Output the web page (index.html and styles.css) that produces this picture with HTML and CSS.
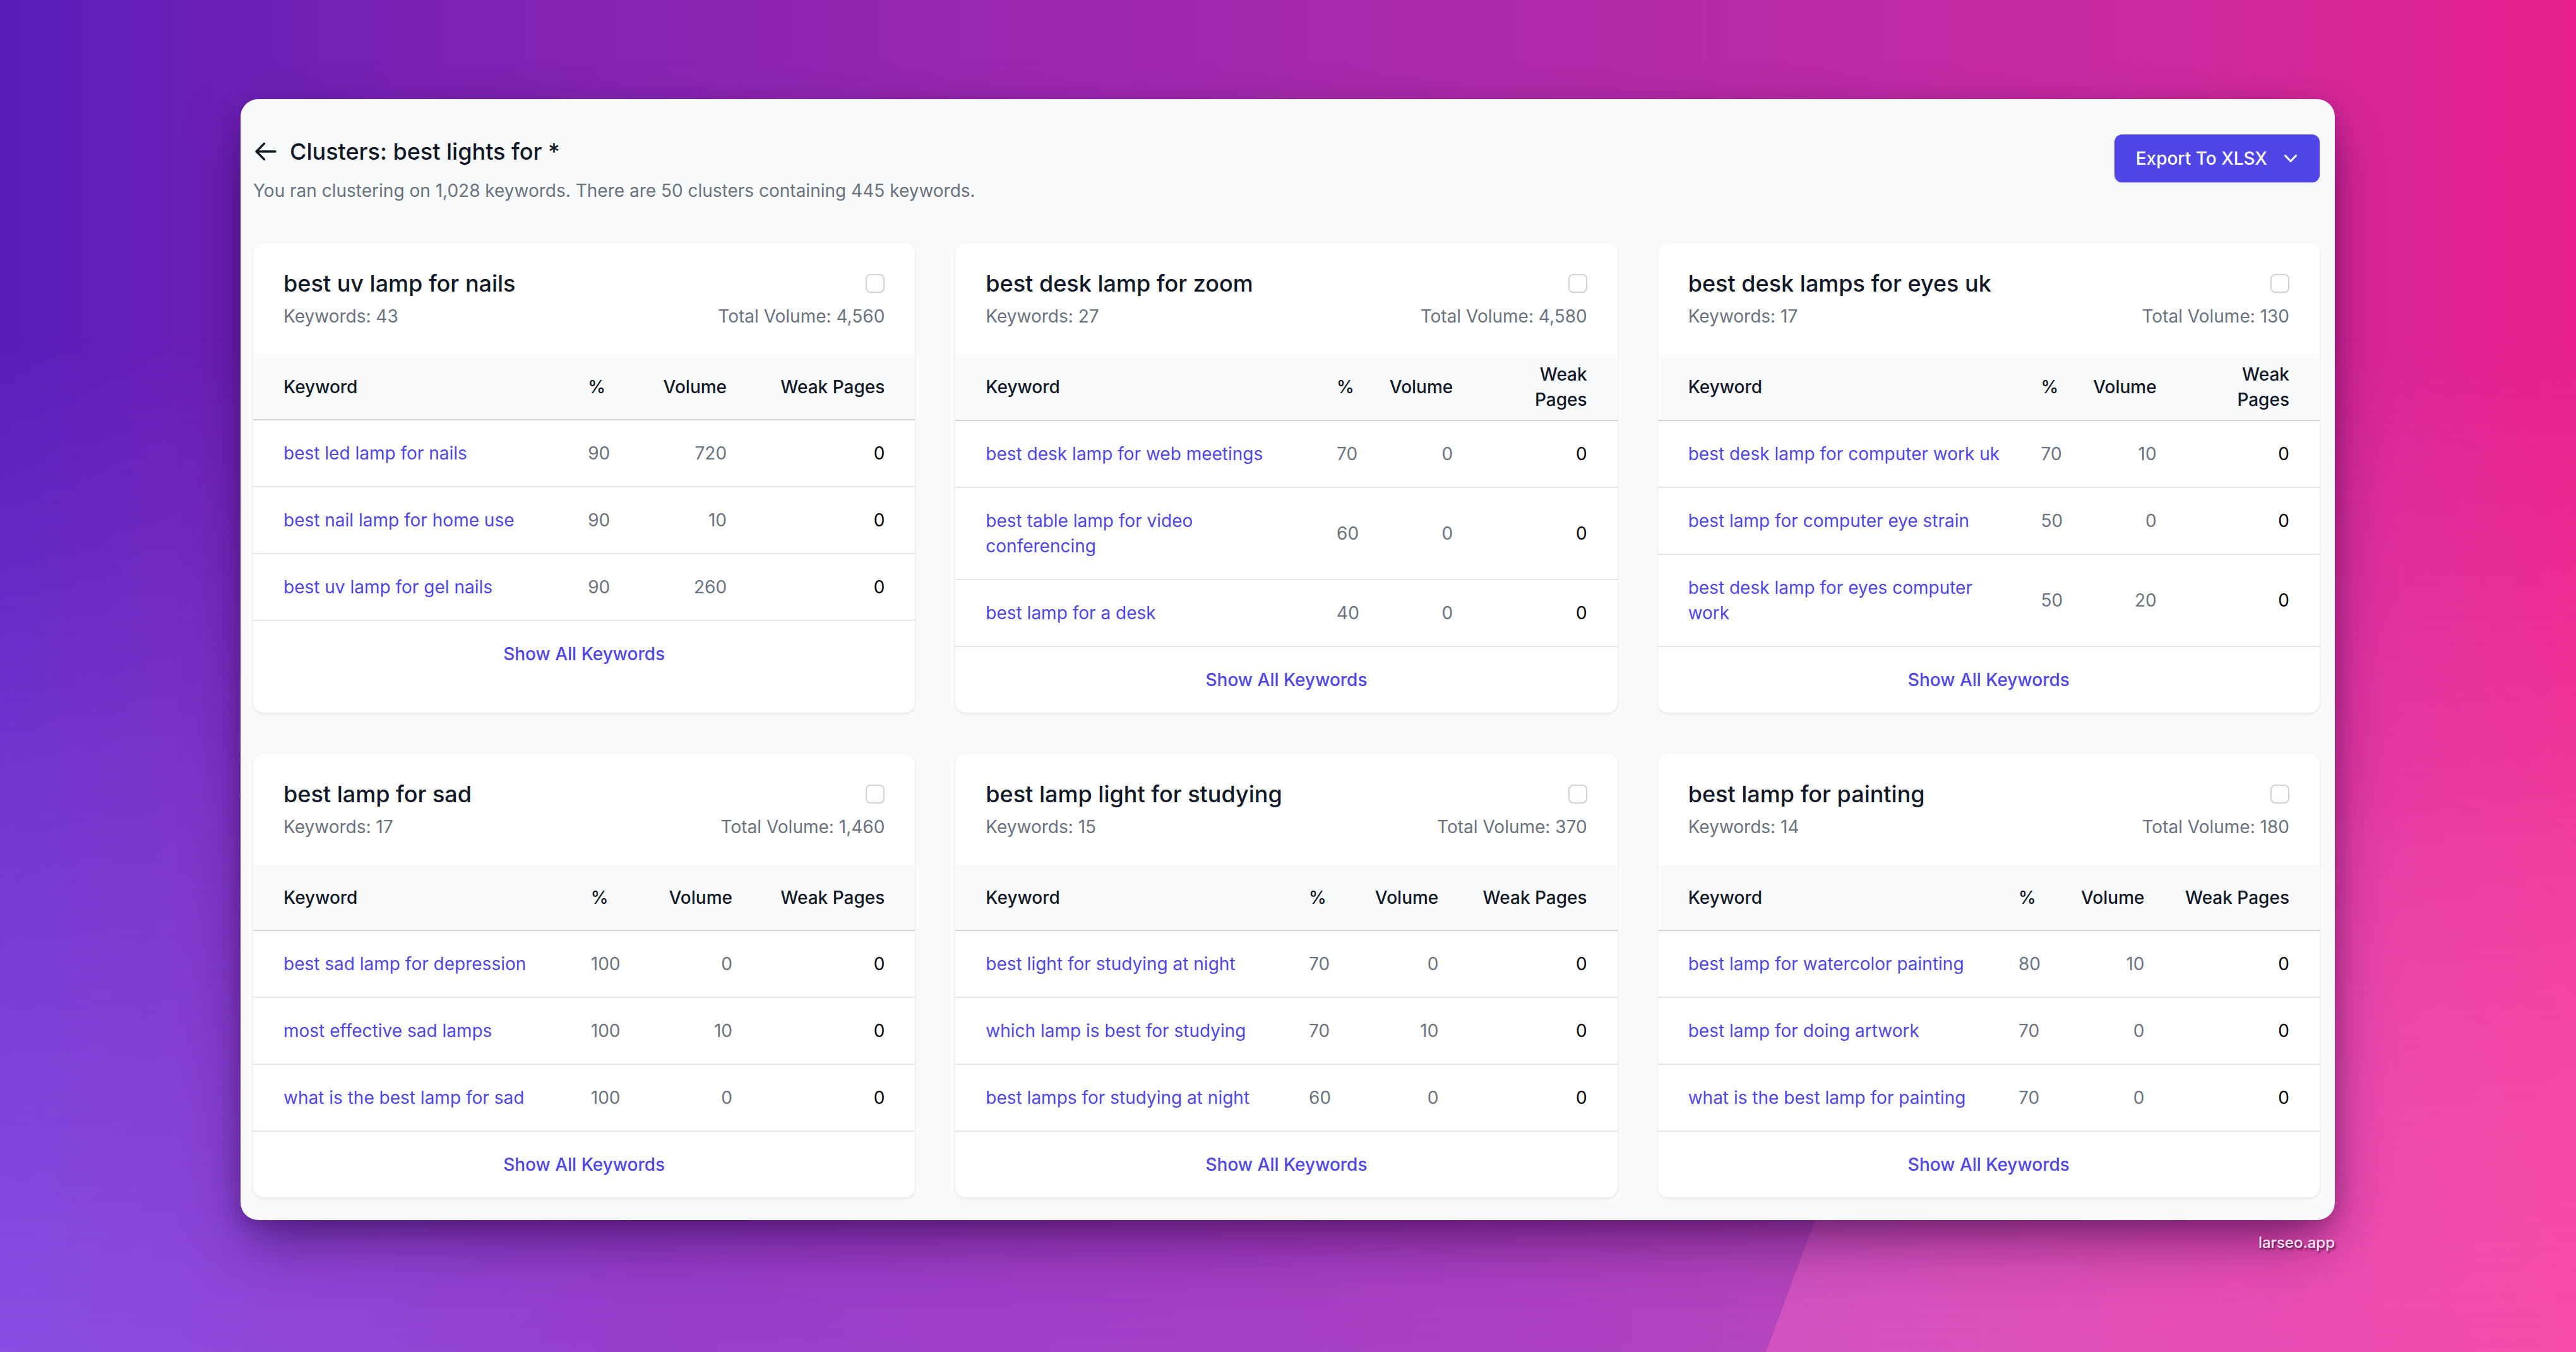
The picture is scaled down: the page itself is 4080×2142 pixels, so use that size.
FILE: index.html
```html
<!DOCTYPE html>
<html lang="en">
<head>
<meta charset="utf-8">
<title>Clusters: best lights for *</title>
<link rel="stylesheet" href="styles.css">
</head>
<body>
<div class="bg-bottom"></div>
<div class="bg-shape"></div>
<div class="stage">
  <main class="panel">
    <header class="page-head">
      <div class="head-text">
        <h1 class="page-title">
          <svg class="back-icon" viewBox="0 0 24 24" fill="none" stroke="#111827" stroke-width="2" stroke-linecap="round" stroke-linejoin="round"><path d="M10.5 19.5 3 12m0 0 7.5-7.5M3 12h18"/></svg>
          <span>Clusters: best lights for *</span>
        </h1>
        <p class="page-sub">You ran clustering on 1,028 keywords. There are 50 clusters containing 445 keywords.</p>
      </div>
      <button class="export-btn" type="button">
        <span>Export To XLSX</span>
        <svg class="chev" viewBox="0 0 20 20" fill="#ffffff"><path fill-rule="evenodd" d="M5.23 7.21a.75.75 0 011.06.02L10 11.168l3.71-3.938a.75.75 0 111.08 1.04l-4.25 4.5a.75.75 0 01-1.08 0l-4.25-4.5a.75.75 0 01.02-1.06z" clip-rule="evenodd"/></svg>
      </button>
    </header>

    <section class="cards">
      <article class="card">
        <div class="card-head">
          <div class="card-title-row"><h2 class="card-title">best uv lamp for nails</h2><span class="checkbox"></span></div>
          <div class="card-meta"><span>Keywords: 43</span><span>Total Volume: 4,560</span></div>
        </div>
        <table class="kw-table">
          <thead><tr><th class="c-kw">Keyword</th><th class="c-pct">%</th><th class="c-vol">Volume</th><th class="c-weak">Weak Pages</th></tr></thead>
          <tbody>
            <tr><td class="c-kw">best led lamp for nails</td><td class="c-pct">90</td><td class="c-vol">720</td><td class="c-weak">0</td></tr>
            <tr><td class="c-kw">best nail lamp for home use</td><td class="c-pct">90</td><td class="c-vol">10</td><td class="c-weak">0</td></tr>
            <tr><td class="c-kw">best uv lamp for gel nails</td><td class="c-pct">90</td><td class="c-vol">260</td><td class="c-weak">0</td></tr>
          </tbody>
        </table>
        <div class="card-foot">Show All Keywords</div>
      </article>

      <article class="card">
        <div class="card-head">
          <div class="card-title-row"><h2 class="card-title">best desk lamp for zoom</h2><span class="checkbox"></span></div>
          <div class="card-meta"><span>Keywords: 27</span><span>Total Volume: 4,580</span></div>
        </div>
        <table class="kw-table">
          <thead><tr><th class="c-kw">Keyword</th><th class="c-pct">%</th><th class="c-vol">Volume</th><th class="c-weak">Weak Pages</th></tr></thead>
          <tbody>
            <tr><td class="c-kw">best desk lamp for web meetings</td><td class="c-pct">70</td><td class="c-vol">0</td><td class="c-weak">0</td></tr>
            <tr><td class="c-kw">best table lamp for video conferencing</td><td class="c-pct">60</td><td class="c-vol">0</td><td class="c-weak">0</td></tr>
            <tr><td class="c-kw">best lamp for a desk</td><td class="c-pct">40</td><td class="c-vol">0</td><td class="c-weak">0</td></tr>
          </tbody>
        </table>
        <div class="card-foot">Show All Keywords</div>
      </article>

      <article class="card">
        <div class="card-head">
          <div class="card-title-row"><h2 class="card-title">best desk lamps for eyes uk</h2><span class="checkbox"></span></div>
          <div class="card-meta"><span>Keywords: 17</span><span>Total Volume: 130</span></div>
        </div>
        <table class="kw-table">
          <thead><tr><th class="c-kw">Keyword</th><th class="c-pct">%</th><th class="c-vol">Volume</th><th class="c-weak">Weak Pages</th></tr></thead>
          <tbody>
            <tr><td class="c-kw">best desk lamp for computer work uk</td><td class="c-pct">70</td><td class="c-vol">10</td><td class="c-weak">0</td></tr>
            <tr><td class="c-kw">best lamp for computer eye strain</td><td class="c-pct">50</td><td class="c-vol">0</td><td class="c-weak">0</td></tr>
            <tr><td class="c-kw">best desk lamp for eyes computer work</td><td class="c-pct">50</td><td class="c-vol">20</td><td class="c-weak">0</td></tr>
          </tbody>
        </table>
        <div class="card-foot">Show All Keywords</div>
      </article>

      <article class="card">
        <div class="card-head">
          <div class="card-title-row"><h2 class="card-title">best lamp for sad</h2><span class="checkbox"></span></div>
          <div class="card-meta"><span>Keywords: 17</span><span>Total Volume: 1,460</span></div>
        </div>
        <table class="kw-table">
          <thead><tr><th class="c-kw">Keyword</th><th class="c-pct">%</th><th class="c-vol">Volume</th><th class="c-weak">Weak Pages</th></tr></thead>
          <tbody>
            <tr><td class="c-kw">best sad lamp for depression</td><td class="c-pct">100</td><td class="c-vol">0</td><td class="c-weak">0</td></tr>
            <tr><td class="c-kw">most effective sad lamps</td><td class="c-pct">100</td><td class="c-vol">10</td><td class="c-weak">0</td></tr>
            <tr><td class="c-kw">what is the best lamp for sad</td><td class="c-pct">100</td><td class="c-vol">0</td><td class="c-weak">0</td></tr>
          </tbody>
        </table>
        <div class="card-foot">Show All Keywords</div>
      </article>

      <article class="card">
        <div class="card-head">
          <div class="card-title-row"><h2 class="card-title">best lamp light for studying</h2><span class="checkbox"></span></div>
          <div class="card-meta"><span>Keywords: 15</span><span>Total Volume: 370</span></div>
        </div>
        <table class="kw-table">
          <thead><tr><th class="c-kw">Keyword</th><th class="c-pct">%</th><th class="c-vol">Volume</th><th class="c-weak">Weak Pages</th></tr></thead>
          <tbody>
            <tr><td class="c-kw">best light for studying at night</td><td class="c-pct">70</td><td class="c-vol">0</td><td class="c-weak">0</td></tr>
            <tr><td class="c-kw">which lamp is best for studying</td><td class="c-pct">70</td><td class="c-vol">10</td><td class="c-weak">0</td></tr>
            <tr><td class="c-kw">best lamps for studying at night</td><td class="c-pct">60</td><td class="c-vol">0</td><td class="c-weak">0</td></tr>
          </tbody>
        </table>
        <div class="card-foot">Show All Keywords</div>
      </article>

      <article class="card">
        <div class="card-head">
          <div class="card-title-row"><h2 class="card-title">best lamp for painting</h2><span class="checkbox"></span></div>
          <div class="card-meta"><span>Keywords: 14</span><span>Total Volume: 180</span></div>
        </div>
        <table class="kw-table">
          <thead><tr><th class="c-kw">Keyword</th><th class="c-pct">%</th><th class="c-vol">Volume</th><th class="c-weak">Weak Pages</th></tr></thead>
          <tbody>
            <tr><td class="c-kw">best lamp for watercolor painting</td><td class="c-pct">80</td><td class="c-vol">10</td><td class="c-weak">0</td></tr>
            <tr><td class="c-kw">best lamp for doing artwork</td><td class="c-pct">70</td><td class="c-vol">0</td><td class="c-weak">0</td></tr>
            <tr><td class="c-kw">what is the best lamp for painting</td><td class="c-pct">70</td><td class="c-vol">0</td><td class="c-weak">0</td></tr>
          </tbody>
        </table>
        <div class="card-foot">Show All Keywords</div>
      </article>
    </section>
  </main>
  <div class="credit">larseo.app</div>
</div>
</body>
</html>
```

FILE: styles.css
```css
* { box-sizing: border-box; }

html, body {
  margin: 0;
  padding: 0;
}

body {
  width: 4080px;
  height: 2142px;
  position: relative;
  overflow: hidden;
  font-family: Inter, "Noto Sans", "Liberation Sans", sans-serif;
  color: #111827;
  background: linear-gradient(90deg, #5a1db9 0%, #7d22b4 18%, #9627b0 36%, #ab2aab 55%, #bd2aa6 72%, #cf2a9e 86%, #e8208c 100%);
}

.bg-bottom {
  position: absolute;
  inset: 0;
  background: linear-gradient(90deg, #8a4ee3 0%, #963fcc 25%, #a23fc6 45%, #ad42c1 62%, #b346bd 70%, #d24fbe 75%, #ee4bad 92%, #f74ba8 100%);
  -webkit-mask-image: linear-gradient(to bottom, rgba(0,0,0,0) 25%, rgba(0,0,0,0.55) 60%, rgba(0,0,0,1) 100%);
  mask-image: linear-gradient(to bottom, rgba(0,0,0,0) 25%, rgba(0,0,0,0.55) 60%, rgba(0,0,0,1) 100%);
}

.bg-shape {
  position: absolute;
  inset: 0;
  background: linear-gradient(90deg, #d253bf 70%, #e14fb7 82%, #f64ba9 100%);
  clip-path: polygon(2797px 2142px, 2880px 1920px, 2960px 1500px, 4080px 1200px, 4080px 2142px);
  -webkit-mask-image: linear-gradient(to bottom, rgba(0,0,0,0) 55%, rgba(0,0,0,0.9) 92%, rgba(0,0,0,1) 100%);
  mask-image: linear-gradient(to bottom, rgba(0,0,0,0) 55%, rgba(0,0,0,0.9) 92%, rgba(0,0,0,1) 100%);
}

.stage {
  position: relative;
  padding: 157px 0 0 381px;
  width: 4080px;
}

.panel {
  width: 3317px;
  height: 1776px;
  background: #f9fafb;
  border-radius: 28px;
  padding: 55px 24px 36px 20px;
  box-shadow: 0 40px 90px -10px rgba(40, 0, 60, 0.55), 0 10px 30px rgba(40, 0, 60, 0.2);
}

.page-head {
  display: flex;
  justify-content: space-between;
  align-items: flex-start;
}

.page-title {
  margin: 0;
  display: flex;
  align-items: center;
  gap: 18px;
  font-size: 36px;
  line-height: 56px;
  font-weight: 500;
  color: #111827;
}

.back-icon {
  width: 40px;
  height: 40px;
  flex: none;
}

.page-sub {
  margin: 14px 0 0;
  font-size: 28px;
  line-height: 40px;
  color: #6b7280;
}

.export-btn {
  display: flex;
  align-items: center;
  margin-top: 1px;
  height: 76px;
  padding: 0 26px 0 34px;
  border: 0;
  border-radius: 12px;
  background: #4f46e5;
  color: #ffffff;
  font-family: Inter, "Noto Sans", "Liberation Sans", sans-serif;
  font-size: 28px;
  line-height: 40px;
  font-weight: 500;
  box-shadow: 0 2px 4px rgba(0,0,0,0.08);
}

.export-btn .chev {
  width: 40px;
  height: 40px;
  margin-left: 17px;
}

.cards {
  margin-top: 63px;
  display: grid;
  grid-template-columns: repeat(3, 1fr);
  column-gap: 64px;
  row-gap: 65px;
}

.card {
  background: #ffffff;
  border-radius: 16px;
  overflow: hidden;
  box-shadow: 0 2px 5px rgba(0,0,0,0.08), 0 0 2px rgba(0,0,0,0.05);
}

.card-head {
  padding: 36px 48px 40px;
}

.card-title-row {
  display: flex;
  justify-content: space-between;
  align-items: center;
}

.card-title {
  margin: 0;
  font-size: 36px;
  line-height: 56px;
  font-weight: 500;
  color: #111827;
}

.checkbox {
  width: 30px;
  height: 30px;
  border: 2px solid #d1d5db;
  border-radius: 8px;
  background: #ffffff;
  box-shadow: 0 1px 2px rgba(0,0,0,0.06);
  flex: none;
}

.card-meta {
  margin-top: 4px;
  display: flex;
  justify-content: space-between;
  font-size: 28px;
  line-height: 40px;
  color: #6b7280;
}

.kw-table {
  width: 100%;
  border-collapse: collapse;
  font-size: 28px;
  line-height: 40px;
}

.kw-table thead {
  background: #f9fafb;
}

.kw-table th {
  height: 104px;
  padding: 12px 24px;
  font-weight: 500;
  color: #111827;
  vertical-align: middle;
  border-bottom: 2px solid #d1d5db;
}

.kw-table td {
  padding: 32px 24px;
  vertical-align: middle;
  border-bottom: 2px solid #e5e7eb;
}

.kw-table .c-kw { padding-left: 48px; text-align: left; }
.kw-table .c-pct { text-align: left; }
.kw-table .c-vol { text-align: right; }
.kw-table .c-weak { padding-right: 48px; text-align: right; }

.kw-table td.c-kw { color: #4f46e5; }
.kw-table td.c-pct,
.kw-table td.c-vol { color: #6b7280; }
.kw-table td.c-weak { color: #000000; }

.card-foot {
  padding: 32px 48px;
  text-align: center;
  font-size: 28px;
  line-height: 40px;
  font-weight: 500;
  color: #4f46e5;
}

.credit {
  width: 3317px;
  margin-top: 20px;
  text-align: right;
  font-size: 24px;
  line-height: 32px;
  font-weight: 500;
  color: #fbe3f4;
  text-shadow: 2px 3px 3px rgba(50, 0, 50, 0.65);
}
```
